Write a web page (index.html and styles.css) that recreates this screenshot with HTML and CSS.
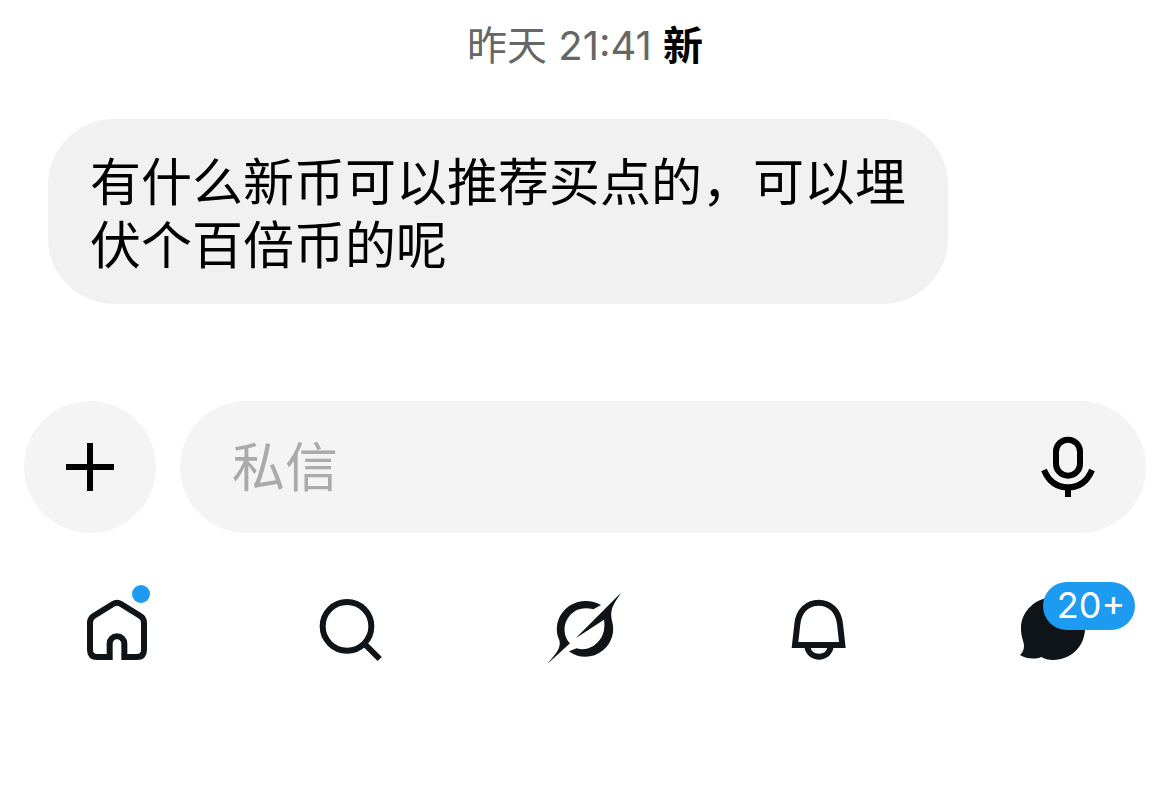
FILE: index.html
```html
<!DOCTYPE html>
<html lang="zh-CN">
<head>
  <meta charset="UTF-8"/>
  <meta name="viewport" content="width=device-width, initial-scale=1.0"/>
  <title>私信</title>
  <link rel="stylesheet" href="styles.css">
</head>
<body>

  <main class="chat">
    <p class="timestamp"><time>昨天 21:41</time> <strong>新</strong></p>
    <p class="message">有什么新币可以推荐买点的，可以埋伏个百倍币的呢</p>
  </main>

  <form class="composer">
    <button type="button" class="add-btn" aria-label="添加">
      <svg class="icon-plus" viewBox="0 0 48 48"><path d="M24 0V48M0 24H48"/></svg>
    </button>
    <div class="field">
      <input type="text" id="dm" aria-label="私信" placeholder="私信">
      <button type="button" class="mic-btn" aria-label="语音">
        <svg class="icon line" viewBox="96 123 216 216">
          <rect x="168" y="149" width="72" height="108" rx="36"/>
          <path d="M132 240C146 274 172 292 204 292S262 274 276 240M204 292V321"/>
        </svg>
      </button>
    </div>
  </form>

  <nav class="tabs">
    <a href="#home" aria-label="主页">
      <svg class="icon line" viewBox="0 0 216 216">
        <path d="M86 189H49Q27 189 27 167V86Q27 73 38 66L96 30Q108 23 120 30L178 66Q189 73 189 86V167Q189 189 167 189H130V149A22 22 0 0 0 86 149Z"/>
      </svg>
      <span class="dot"></span>
    </a>
    <a href="#search" aria-label="搜索">
      <svg class="icon line" viewBox="0 0 216 216">
        <circle cx="96" cy="97" r="73"/>
        <path d="M146 147L194 195"/>
      </svg>
    </a>
    <a href="#grok" aria-label="Grok">
      <svg class="icon" viewBox="57 42 216 216">
        <path d="M213 75C186 59 149 58 121 76C84 99 72 143 87 178C92 192 89 204 78 220L52 252L120 190C102 172 98 140 112 117C127 90 158 78 190 88Z"/>
        <path d="M273 38L137 175L222 119C226 144 221 169 203 187C186 205 162 212 140 205L117 214C147 237 190 236 219 211C247 187 255 154 246 122C241 101 244 86 254 68Z"/>
      </svg>
    </a>
    <a href="#notifications" aria-label="通知">
      <svg class="icon line" viewBox="39 42 216 216">
        <path d="M75 195C77 178 79 158 82 132C86 92 112 68 146 68S206 92 210 132C213 158 215 178 217 195Z"/>
        <path d="M112 200C118 240 176 240 182 200"/>
      </svg>
    </a>
    <a href="#messages" aria-label="消息">
      <svg class="icon" viewBox="51 72 216 216">
        <path d="M160 82C212 82 255 124 255 175C255 230 212 270 160 270C146 270 133 267 124 261C106 269 78 267 60 255C70 245 76 232 69 212C65 200 63 188 63 175C63 124 108 82 160 82Z"/>
      </svg>
      <span class="badge">20+</span>
    </a>
  </nav>

</body>
</html>
```

FILE: styles.css
```css
* {
  box-sizing: border-box;
}

body {
  margin: 0;
  background-color: #fff;
  color: #000;
  font-family: Inter, "Noto Sans CJK SC", sans-serif;
}

button {
  display: flex;
  justify-content: center;
  align-items: center;
  padding: 0;
  border: none;
  background: none;
  color: #000;
  cursor: pointer;
}

/* Conversation */
.chat {
  padding: 16px 48px 0;
}

.timestamp {
  margin: 0;
  color: #666;
  font-size: 40px;
  line-height: 60px;
  text-align: center;
}

.timestamp strong {
  color: #000;
  font-weight: 700;
}

.message {
  width: fit-content;
  max-width: 900px;
  margin: 43px 0 0;
  padding: 32px 42px 27px;
  border-radius: 66px;
  background-color: #f1f1f1;
  font-size: 51px;
  font-weight: 400;
  line-height: 63px;
}

/* Message box */
.composer {
  display: flex;
  gap: 24px;
  padding: 97px 24px 0;
}

.add-btn {
  flex: none;
  width: 132px;
  height: 132px;
  border-radius: 50%;
  background-color: #f4f4f4;
}

.field {
  display: flex;
  flex: 1;
  align-items: center;
  min-width: 0;
  padding: 0 42px 0 52px;
  border-radius: 66px;
  background-color: #f4f4f4;
}

.field input {
  flex: 1;
  min-width: 0;
  padding: 2px 0 0;
  border: none;
  outline: none;
  background: none;
  font-family: inherit;
  font-size: 53px;
}

.field input::placeholder {
  color: #aaa;
  opacity: 1;
}

/* Icons */
.icon {
  display: block;
  width: 72px;
  height: 72px;
  fill: currentColor;
  overflow: visible;
}

.icon.line {
  fill: none;
  stroke: currentColor;
  stroke-width: 18;
}

.icon-plus {
  width: 48px;
  height: 48px;
  stroke: currentColor;
  stroke-width: 6;
}

/* Bottom tabs */
.tabs {
  display: grid;
  grid-template-columns: repeat(5, 1fr);
  justify-items: center;
  padding: 61px 0 48px;
}

.tabs a {
  position: relative;
  color: #0f1419;
  text-decoration: none;
}

.dot {
  position: absolute;
  top: -9px;
  right: 3px;
  width: 18px;
  height: 18px;
  border-radius: 50%;
  background-color: #1d9bf0;
}

.badge {
  position: absolute;
  top: -12px;
  left: 26px;
  width: 92px;
  padding: 0 0 2px 4px;
  border-radius: 24px;
  background-color: #1d9bf0;
  color: #fff;
  font-size: 36px;
  font-weight: 400;
  line-height: 46px;
  text-align: center;
}
```
